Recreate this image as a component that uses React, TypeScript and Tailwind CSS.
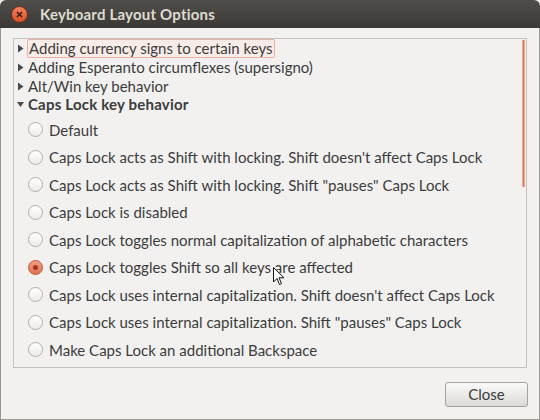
import React from "react";

const radios = [
  "Default",
  "Caps Lock acts as Shift with locking. Shift doesn't affect Caps Lock",
  'Caps Lock acts as Shift with locking. Shift "pauses" Caps Lock',
  "Caps Lock is disabled",
  "Caps Lock toggles normal capitalization of alphabetic characters",
  "Caps Lock toggles Shift so all keys are affected",
  "Caps Lock uses internal capitalization. Shift doesn't affect Caps Lock",
  'Caps Lock uses internal capitalization. Shift "pauses" Caps Lock',
  "Make Caps Lock an additional Backspace",
];

function Arrow({ down }: { down?: boolean }) {
  return (
    <svg width="7" height="9" viewBox="0 0 7 9" className="shrink-0">
      {down ? (
        <polygon points="0,2 7,2 3.5,7" fill="#4a4a4a" />
      ) : (
        <polygon points="1,0.5 6.5,4.5 1,8.5" fill="#4a4a4a" />
      )}
    </svg>
  );
}

function Radio({ checked }: { checked?: boolean }) {
  if (checked) {
    return (
      <div className="w-[15px] h-[15px] rounded-full border border-[#c0583a] bg-gradient-to-b from-[#f0a08a] to-[#e0704f] flex items-center justify-center shrink-0">
        <div className="w-[5px] h-[5px] rounded-full bg-[#a8321a]" />
      </div>
    );
  }
  return (
    <div className="w-[15px] h-[15px] rounded-full border border-[#b3afaa] bg-gradient-to-b from-[#ffffff] to-[#ecebe9] shrink-0" />
  );
}

export default function App() {
  return (
    <div
      className="w-[540px] h-[420px] relative bg-[#f2f1f0] flex flex-col text-[#3c3c3c] overflow-hidden"
      style={{ fontFamily: "Lato, 'Liberation Sans', sans-serif" }}
    >
      <div className="h-[28px] rounded-t-[6px] bg-gradient-to-b from-[#4f4e4a] to-[#3a3935] flex items-center pl-[11px] shrink-0">
        <div className="w-[17px] h-[17px] rounded-full bg-gradient-to-b from-[#f2805c] to-[#d9502a] border border-[#6e2d18] flex items-center justify-center">
          <svg width="7" height="7" viewBox="0 0 7 7">
            <path d="M1 1 L6 6 M6 1 L1 6" stroke="#3a1a10" strokeWidth="1.6" />
          </svg>
        </div>
        <span className="ml-[12px] text-[15px] font-bold text-[#dfdbd2] tracking-[0.2px]">
          Keyboard Layout Options
        </span>
      </div>
      <div className="flex-1 flex flex-col border-x border-b border-[#9a9893]">
        <div className="ml-[12px] mr-[12px] mt-[10px] h-[330px] border border-[#c6c3be] flex">
          <div className="flex-1 flex flex-col pl-[3px] text-[15px]">
            <div className="h-[19px] flex items-center gap-[3px]">
              <Arrow />
              <span className="px-[1px] h-[19px] flex items-center border border-[#eab0a6] bg-[#f8ece9] rounded-[2px]">
                Adding currency signs to certain keys
              </span>
            </div>
            <div className="h-[19px] flex items-center gap-[4px]">
              <Arrow />
              <span>Adding Esperanto circumflexes (supersigno)</span>
            </div>
            <div className="h-[18px] flex items-center gap-[4px]">
              <Arrow />
              <span>Alt/Win key behavior</span>
            </div>
            <div className="h-[19px] flex items-center gap-[4px]">
              <Arrow down />
              <span className="font-bold tracking-[0.2px]">Caps Lock key behavior</span>
            </div>
            <div className="flex flex-col pt-[2px]">
              {radios.map((r, i) => (
                <div key={i} className="h-[27.5px] flex items-center pl-[11px] gap-[6px]">
                  <Radio checked={i === 5} />
                  <span>{r}</span>
                </div>
              ))}
            </div>
          </div>
          <div className="w-[4px] flex flex-col pt-[1px]">
            <div className="h-[147px] w-[3px] bg-[#d7805e] border-x border-[#e9a98e]" />
          </div>
        </div>
        <div className="flex justify-end pr-[11px] pt-[14px]">
          <button className="w-[83px] h-[25px] rounded-[3px] border border-[#a5a29d] bg-gradient-to-b from-[#fafaf9] to-[#dcdad6] text-[15px] text-[#3c3c3c]">
            Close
          </button>
        </div>
      </div>
      <svg className="absolute left-[273px] top-[267px]" width="12" height="19" viewBox="0 0 12 19">
        <path d="M0.5 0.5 L0.5 15 L4 11.5 L6.5 17.5 L8.5 16.5 L6 10.8 L11 10.8 Z" fill="#ffffff" stroke="#111111" strokeWidth="1" />
      </svg>
    </div>
  );
}
